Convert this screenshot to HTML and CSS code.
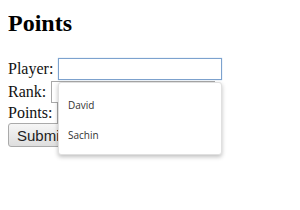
FILE: index.html
```html
<!DOCTYPE html>
<html lang="en">
<head>
  <meta charset="UTF-8" />
  <title>Points</title>
  <link rel="stylesheet" href="styles.css">
</head>
<body>
  <h2 class="title">Points</h2>

  <form class="points-form">
    <div class="row">
      <label for="player">Player:</label>
      <input id="player" class="field focused" type="text" />
    </div>
    <div class="row">
      <label for="rank">Rank:</label>
      <input id="rank" class="field" type="text" />
    </div>
    <div class="row">
      <label for="points">Points:</label>
      <input id="points" class="field" type="text" />
    </div>
    <button type="button" class="submit-btn">Submit</button>

    <!-- autocomplete list for player -->
    <ul class="suggest">
      <li>David</li>
      <li>Sachin</li>
    </ul>
  </form>
</body>
</html>
```

FILE: styles.css
```css
html { height: 100%; background: #fff; }
body {
  margin: 8px;
  min-height: calc(100% - 16px);
  font-family: 'Liberation Serif', serif;
  font-size: 16px;
  color: #111;
  background: #fff;
}
.title {
  font-size: 24px;
  font-weight: bold;
  margin: 2px 0 21px;
  color: #000;
}
.points-form { position: relative; }
.row {
  display: flex;
  align-items: center;
  height: 21px;
  gap: 5px;
}
.row:first-child { height: 22px; margin-bottom: 1px; }
.field {
  height: 22px;
  width: 164px;
  box-sizing: border-box;
  border: 1px solid #a9a9a9;
  padding: 1px 3px;
  font-size: 13px;
}
.field.focused {
  border: 1px solid #7da2ce;
  box-shadow: 0 0 1px #9ec0e6;
  outline: none;
}
.submit-btn {
  margin-top: 0;
  height: 24px;
  padding: 0 8px;
  font-family: 'Liberation Sans', sans-serif;
  font-size: 15px;
  color: #222;
  background: linear-gradient(#f6f6f6, #dedede);
  border: 1px solid #aaa;
  border-radius: 3px;
}
.suggest {
  position: absolute;
  top: 24px;
  left: 50px;
  width: 164px;
  height: 73px;
  box-sizing: border-box;
  margin: 0;
  padding: 9px 0 0;
  list-style: none;
  background: #fff;
  border: 1px solid #e0e0e0;
  border-radius: 3px;
  box-shadow: 0 2px 4px rgba(0,0,0,0.25);
  font-family: 'Open Sans', sans-serif;
  font-size: 10px;
  color: #333;
}
.suggest li {
  padding: 6px 9px;
  height: 18px;
}
```
